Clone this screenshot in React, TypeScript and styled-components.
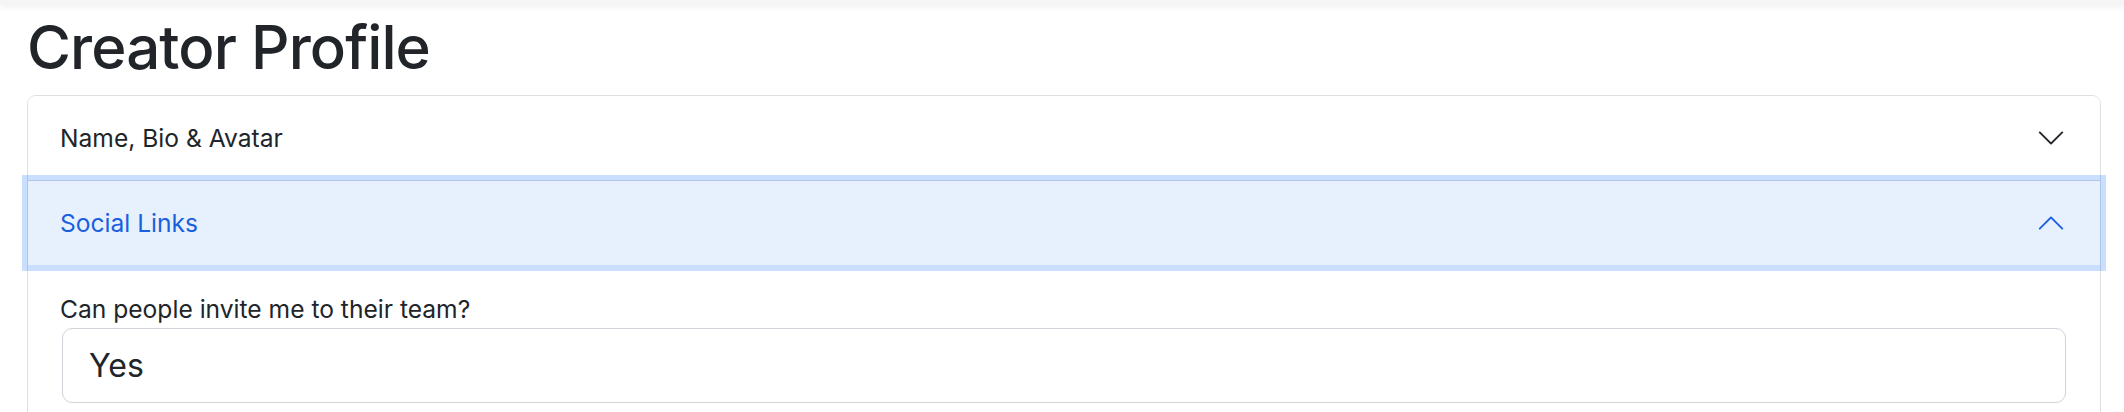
import { useState } from 'react';
import styled, { createGlobalStyle, css } from 'styled-components';

const GlobalStyle = createGlobalStyle`
  html, body {
    margin: 0;
    padding: 0;
    background: #fff;
  }
  body {
    font-family: Inter, "Liberation Sans", Arial, sans-serif;
    color: #212529;
  }
  * {
    box-sizing: border-box;
  }
`;

const sections = [
  { id: 'profile', title: 'Name, Bio & Avatar' },
  { id: 'social', title: 'Social Links' },
];

export default function App() {
  const [open, setOpen] = useState('social');

  return (
    <>
      <GlobalStyle />
      <TopBar />
      <Page>
        <Title>Creator Profile</Title>
        <Accordion>
          {sections.map((s) => {
            const active = open === s.id;
            return (
              <Item key={s.id}>
                <HeaderButton
                  type="button"
                  $active={active}
                  onClick={() => setOpen(active ? '' : s.id)}
                >
                  <span>{s.title}</span>
                  <Chevron $active={active} viewBox="0 0 16 16" aria-hidden="true">
                    <path
                      fill="currentColor"
                      fillRule="evenodd"
                      d="M1.646 4.646a.5.5 0 0 1 .708 0L8 10.293l5.646-5.647a.5.5 0 0 1 .708.708l-6 6a.5.5 0 0 1-.708 0l-6-6a.5.5 0 0 1 0-.708z"
                    />
                  </Chevron>
                </HeaderButton>
                {active && s.id === 'social' && (
                  <Body>
                    <Label htmlFor="invite">Can people invite me to their team?</Label>
                    <Field id="invite" defaultValue="Yes" />
                  </Body>
                )}
              </Item>
            );
          })}
        </Accordion>
      </Page>
    </>
  );
}

const TopBar = styled.div`
  height: 5px;
  background: #f5f5f5;
  box-shadow: 0 2px 6px rgba(0, 0, 0, 0.07);
`;

const Page = styled.main`
  padding: 6px 23px 0 27px;
`;

const Title = styled.h1`
  margin: 0 0 12px;
  font-size: 60px;
  font-weight: 500;
  line-height: 72px;
  letter-spacing: -0.015em;
  color: #212529;
`;

const Accordion = styled.div`
  border: 1px solid #dfdfdf;
  border-radius: 9px;
  background: #fff;
`;

const Item = styled.div`
  & + & {
    border-top: 1px solid #dfdfdf;
  }
  &:first-child > button {
    border-top-left-radius: 8px;
    border-top-right-radius: 8px;
  }
`;

const HeaderButton = styled.button<{ $active: boolean }>`
  position: relative;
  display: flex;
  align-items: center;
  justify-content: space-between;
  width: 100%;
  height: 84px;
  padding: 0 34px 0 32px;
  border: 0;
  margin: 0;
  background: #fff;
  color: #212529;
  font-family: inherit;
  font-size: 24.6px;
  line-height: 36px;
  text-align: left;
  cursor: pointer;

  ${(p) =>
    p.$active &&
    css`
      z-index: 3;
      background: #e7f0fd;
      color: #1a5fe0;
      box-shadow: 0 0 0 6px rgba(13, 110, 253, 0.22);
    `}
`;

const Chevron = styled.svg<{ $active: boolean }>`
  flex: none;
  width: 30px;
  height: 30px;
  color: ${(p) => (p.$active ? '#1a5fe0' : '#212529')};
  transform: ${(p) => (p.$active ? 'rotate(-180deg)' : 'none')};
`;

const Body = styled.div`
  padding: 26px 32px 24px;
`;

const Label = styled.label`
  display: block;
  margin-bottom: 1px;
  font-size: 24.6px;
  line-height: 36px;
  color: #212529;
`;

const Field = styled.input`
  display: block;
  width: calc(100% - 4px);
  height: 75px;
  margin: 0 2px;
  padding: 0 26px;
  border: 1px solid #ced4da;
  border-radius: 10px;
  background: #fff;
  font-family: inherit;
  font-size: 32px;
  color: #212529;
  outline: none;
`;
